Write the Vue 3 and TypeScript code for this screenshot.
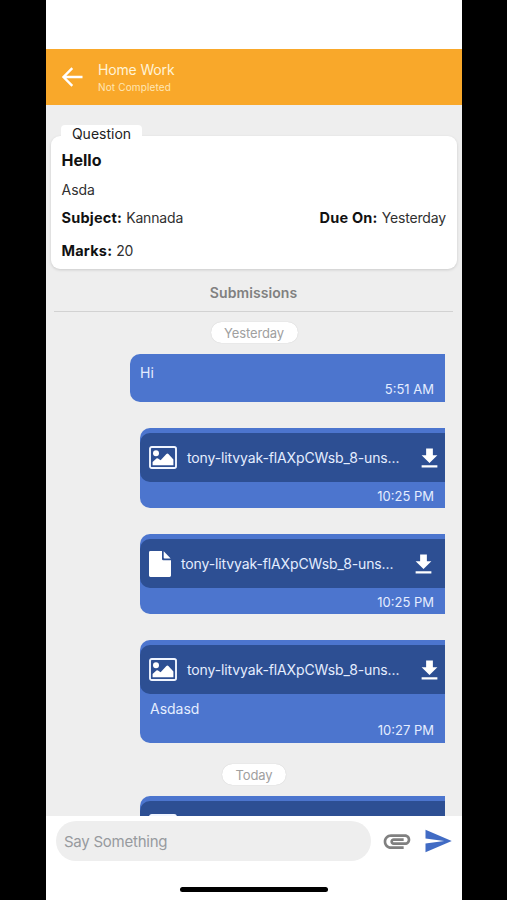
<script setup lang="ts">
interface Message {
  kind: 'text' | 'image' | 'file'
  file?: string
  text?: string
  time?: string
}
interface Day {
  label: string
  messages: Message[]
}

const file = 'tony-litvyak-flAXpCWsb_8-uns...'

const days: Day[] = [
  {
    label: 'Yesterday',
    messages: [
      { kind: 'text', text: 'Hi', time: '5:51 AM' },
      { kind: 'image', file, time: '10:25 PM' },
      { kind: 'file', file, time: '10:25 PM' },
      { kind: 'image', file, text: 'Asdasd', time: '10:27 PM' },
    ],
  },
  { label: 'Today', messages: [{ kind: 'image' }] },
]
</script>

<template>
  <div class="stage">
    <div class="phone">
      <header class="header">
        <svg class="back" viewBox="0 0 22 22">
          <path d="M21.500 11H2.500M11.300 2.200L2.500 11l8.800 8.800" fill="none" stroke="#fff" stroke-width="2.400" />
        </svg>
        <div class="titles">
          <div class="title">Home Work</div>
          <div class="subtitle">Not Completed</div>
        </div>
      </header>

      <main class="content">
        <section class="card">
          <div class="tab">Question</div>
          <div class="name">Hello</div>
          <div class="desc">Asda</div>
          <div class="row">
            <div><b>Subject:</b> <span class="val">Kannada</span></div>
            <div><b>Due On:</b> <span class="val">Yesterday</span></div>
          </div>
          <div class="marks"><b>Marks:</b> <span class="val">20</span></div>
        </section>

        <div class="section-title">Submissions</div>

        <template v-for="day in days" :key="day.label">
          <div class="day" :class="day.label.toLowerCase()">{{ day.label }}</div>
          <div class="messages">
            <article
              v-for="(m, i) in day.messages"
              :key="i"
              class="bubble"
              :class="{ plain: m.kind === 'text', captioned: m.kind !== 'text' && m.text }"
            >
              <div v-if="m.kind !== 'text'" class="attachment">
                <svg v-if="m.kind === 'image'" class="picture" viewBox="0 0 28 23">
                  <rect x="1" y="1" width="26" height="21" rx="1.800" fill="none" stroke="#f0f5ff" stroke-width="1.900" />
                  <circle cx="7" cy="7.200" r="3" fill="#fff" />
                  <path d="M3.600 19.200v-3.200l3.800-3.400q.8-.6 1.600 0l2.600 1.600 5.800-6.200q1-.9 2 0l5 5.400v5.800z" fill="#fff" />
                </svg>
                <svg v-else class="document" viewBox="0 0 22 26">
                  <path d="M1.400 0H13v8q0 1.300 1.300 1.300H22v15.300q0 1.400-1.400 1.400H1.400Q0 26 0 24.600V1.400Q0 0 1.400 0z" fill="#fff" />
                  <path d="M14.700 .3L21.700 7.600H15.700q-1 0-1-1z" fill="#fff" />
                </svg>
                <span class="filename">{{ m.file }}</span>
                <svg class="download" viewBox="0 0 24 24">
                  <path d="M19 9h-4V3H9v6H5l7 7 7-7zM5 18v2h14v-2H5z" fill="#fff" />
                </svg>
              </div>
              <div v-if="m.text" class="text">{{ m.text }}</div>
              <time v-if="m.time" class="time">{{ m.time }}</time>
            </article>
          </div>
        </template>
      </main>

      <footer class="footer">
        <div class="composer">
          <div class="input">Say Something</div>
          <svg class="clip" viewBox="0 0 24 24">
            <path
              d="M2 12.500C2 9.460 4.460 7 7.500 7H18c2.210 0 4 1.790 4 4s-1.790 4-4 4H9.500C8.120 15 7 13.880 7 12.500S8.120 10 9.500 10H17v2H9.410c-.55 0-.55 1 0 1H18c1.100 0 2-.9 2-2s-.9-2-2-2H7.500C5.570 9 4 10.570 4 12.500S5.570 16 7.500 16H17v2H7.500C4.460 18 2 15.540 2 12.500z"
              fill="#808080"
            />
          </svg>
          <svg class="send" viewBox="0 0 24 24">
            <path d="M2.010 21L23 12 2.010 3 2 10l15 2-15 2z" fill="#416bc4" />
          </svg>
        </div>
        <div class="home"></div>
      </footer>
    </div>
  </div>
</template>

<style>
body {
  margin: 0;
  background: #000;
}
</style>

<style scoped>
.stage {
  height: 900px;
  overflow: hidden;
  background: #000;
  display: flex;
  padding-left: 46px;
  box-sizing: border-box;
  font-family: Inter, "Liberation Sans", sans-serif;
}
.phone {
  width: 416px;
  height: 900px;
  background: #fff;
  display: flex;
  flex-direction: column;
  padding-top: 49px;
  box-sizing: border-box;
}
svg {
  display: block;
  flex: none;
}
.header {
  flex: none;
  height: 56px;
  background: #f9a82a;
  display: flex;
  align-items: center;
  padding-left: 15px;
}
.back {
  width: 22px;
  height: 22px;
}
.titles {
  margin-left: 15px;
  color: #fff3d6;
}
.title {
  font-size: 14px;
  line-height: 19px;
  letter-spacing: -0.15px;
}
.subtitle {
  font-size: 10px;
  line-height: 16px;
  letter-spacing: 0.15px;
  color: #ffe6b4;
}
.content {
  flex: 1;
  min-height: 0;
  overflow: hidden;
  background: #eee;
  display: flex;
  flex-direction: column;
}
.card {
  flex: none;
  position: relative;
  height: 133px;
  margin: 31px 5px 0;
  padding: 13px 11px 0 10.5px;
  box-sizing: border-box;
  background: #fff;
  border-radius: 9px;
  box-shadow: 0 1px 3px rgba(0, 0, 0, 0.15);
  color: #303030;
  font-size: 14px;
}
.tab {
  position: absolute;
  left: 10px;
  top: -11px;
  width: 81px;
  height: 18px;
  line-height: 18px;
  text-align: center;
  background: #fff;
  border-radius: 4px;
  font-size: 14px;
  color: #222;
}
.card b {
  color: #111;
  font-weight: 700;
  font-size: 14.5px;
  letter-spacing: 0.22px;
}
.name {
  font-size: 16px;
  line-height: 22px;
  font-weight: 700;
  color: #111;
}
.desc {
  margin-top: 9px;
  line-height: 20px;
}
.row {
  display: flex;
  justify-content: space-between;
  height: 20px;
  margin-top: 8px;
  line-height: 20px;
}
.val {
  letter-spacing: -0.15px;
}
.marks {
  margin-top: 13px;
  line-height: 20px;
}
.section-title {
  flex: none;
  height: 42px;
  margin: 0 9px 0 8px;
  line-height: 48px;
  border-bottom: 1px solid #d2d2d2;
  text-align: center;
  font-size: 14px;
  font-weight: 600;
  letter-spacing: 0.08px;
  color: #808080;
}
.day {
  flex: none;
  align-self: center;
  height: 21px;
  line-height: 22px;
  border-radius: 11px;
  background: #fff;
  box-shadow: 0 0 1px rgba(0, 0, 0, 0.2);
  text-align: center;
  font-size: 13px;
  letter-spacing: -0.1px;
  color: #a0a0a0;
}
.yesterday {
  width: 87px;
  margin: 10px 0 11px;
}
.today {
  width: 64px;
  margin: 21px 0 11px;
}
.messages {
  flex: none;
  display: flex;
  flex-direction: column;
  align-items: flex-end;
  gap: 26px;
  padding-right: 17px;
}
.bubble {
  display: flex;
  flex-direction: column;
  width: 305px;
  height: 80px;
  box-sizing: border-box;
  padding-top: 5px;
  border-radius: 10px 0 0 10px;
  background: #4c75ce;
  color: #e4edff;
}
.bubble.plain {
  width: 315px;
  height: 48px;
  padding-top: 10px;
}
.bubble.captioned {
  height: 103px;
}
.attachment {
  flex: none;
  height: 49px;
  display: flex;
  align-items: center;
  padding-left: 9px;
  border-radius: 10px 0 0 10px;
  background: #2d4f93;
}
.picture {
  width: 28px;
  height: 23px;
}
.document {
  width: 22px;
  height: 26px;
}
.filename {
  width: 213px;
  margin-left: 10px;
  font-size: 14px;
  letter-spacing: -0.12px;
  white-space: nowrap;
}
.download {
  width: 27px;
  height: 27px;
  margin: 2px 0 0 16px;
}
.text {
  padding-left: 10px;
  font-size: 14px;
  line-height: 18px;
}
.captioned .text {
  padding-top: 6px;
}
.time {
  align-self: flex-end;
  padding-right: 11px;
  font-size: 13px;
  line-height: 28px;
}
.captioned .time {
  line-height: 24px;
}
.plain .time {
  line-height: 14px;
}
.footer {
  flex: none;
  height: 84px;
  background: #fff;
  display: flex;
  flex-direction: column;
  align-items: center;
}
.composer {
  align-self: stretch;
  display: flex;
  align-items: center;
  padding: 5px 0 0 10px;
}
.input {
  width: 315px;
  height: 40px;
  line-height: 41px;
  box-sizing: border-box;
  padding-left: 8px;
  border-radius: 20px;
  background: #eee;
  font-size: 15px;
  letter-spacing: -0.25px;
  color: #979a9e;
}
.clip {
  width: 32px;
  height: 32px;
  margin-left: 10px;
}
.send {
  width: 30px;
  height: 30px;
  margin-left: 10px;
}
.home {
  width: 148px;
  height: 5px;
  margin-top: 26px;
  border-radius: 3px;
  background: #000;
}
</style>
